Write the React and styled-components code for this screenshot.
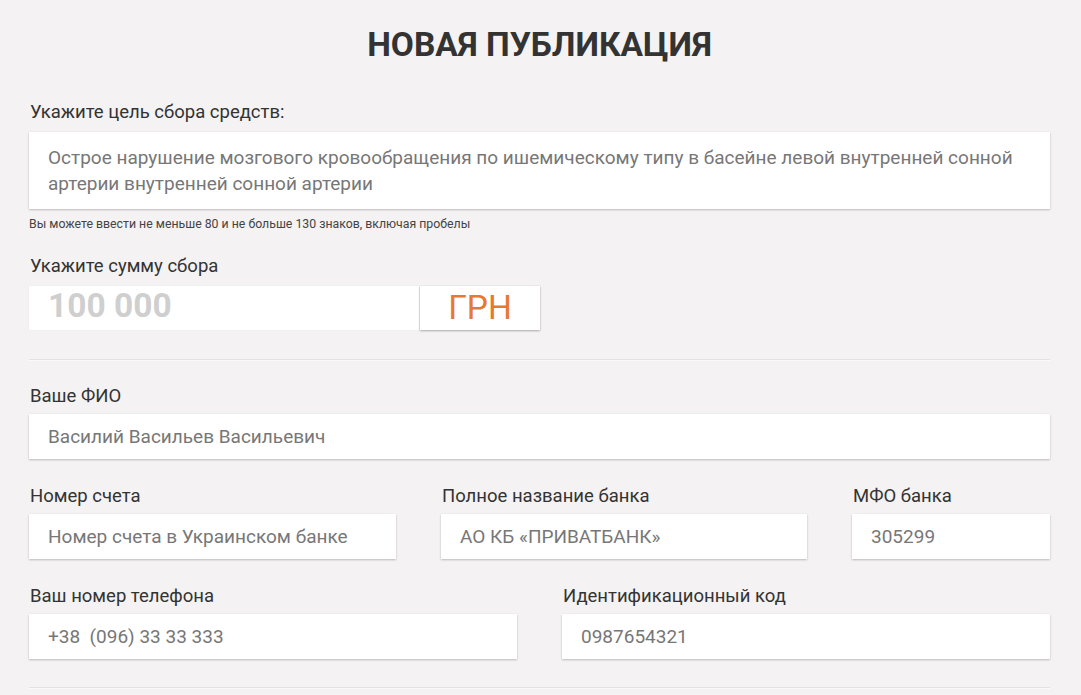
import styled, { createGlobalStyle } from "styled-components"

const GlobalStyle = createGlobalStyle`
  body {
    margin: 0;
    background: #f4f2f3;
    font-family: Roboto, "Liberation Sans", sans-serif;
    color: #333;
  }
`;

const Page = styled.div`
  padding: 0 31px 0 29px;
`;

const Title = styled.h1`
  margin: 0;
  padding-top: 25px;
  height: 69px;
  box-sizing: border-box;
  text-align: center;
  font-size: 33.5px;
  font-weight: 700;
  color: #333;
  line-height: 40px;
`;

const Field = styled.div`
  display: flex;
  flex-direction: column;
  min-width: 0;
`;

const Label = styled.label`
  display: block;
  font-size: 18.5px;
  line-height: 20px;
  color: #333;
  margin-bottom: ${(p) => p.$gap || 8}px;
  padding-left: 1px;
  white-space: nowrap;
`;

const Box = styled.div`
  background: #fff;
  box-shadow: 0 1px 2px rgba(0, 0, 0, 0.22), 0 0 1px rgba(0, 0, 0, 0.08);
  font-size: 19px;
  color: #777;
  padding: ${(p) => (p.$area ? "13px 19px 12px" : "0 19px")};
  line-height: ${(p) => (p.$area ? "26px" : "45px")};
  height: ${(p) => (p.$area ? "auto" : "45px")};
  box-sizing: border-box;
  white-space: ${(p) => (p.$area ? "normal" : "nowrap")};
  overflow: hidden;
`;

const Hint = styled.div`
  font-size: 12.3px;
  color: #444;
  margin-top: 9px;
  line-height: 13px;
`;

const Section = styled.div`
  margin-top: ${(p) => p.$top || 0}px;
`;

const AmountRow = styled.div`
  display: flex;
  width: 511px;
  height: 44px;
`;

const AmountInput = styled.div`
  flex: 1;
  background: #fff;
  font-size: 33.5px;
  font-weight: 700;
  color: #cfcfcf;
  line-height: 40px;
  padding-left: 19px;
  box-shadow: 0 0 1px rgba(0, 0, 0, 0.08);
`;

const Currency = styled.button`
  width: 120px;
  margin-left: 1px;
  border: none;
  background: #fff;
  box-shadow: 0 1px 2px rgba(0, 0, 0, 0.28), 0 0 1px rgba(0, 0, 0, 0.15);
  font-family: Roboto, "Liberation Sans", sans-serif;
  font-size: 33.5px;
  color: #e8782f;
  padding: 0;
  line-height: 44px;
`;

const Divider = styled.hr`
  margin: ${(p) => p.$top}px 0 0;
  border: none;
  border-top: 1px solid #e3e1e2;
  border-bottom: 1px solid #fbfafa;
  height: 0;
`;

const Grid = styled.div`
  display: grid;
  grid-template-columns: ${(p) => p.$cols};
  column-gap: 45px;
  margin-top: ${(p) => p.$top}px;
`;

export default function App() {
  return (
    <>
      <GlobalStyle />
      <Page>
        <Title>НОВАЯ ПУБЛИКАЦИЯ</Title>

        <Section $top={33}>
          <Label $gap={10}>Укажите цель сбора средств:</Label>
          <Box $area>
            Острое нарушение мозгового кровообращения по ишемическому типу в басейне левой внутренней сонной
            артерии внутренней сонной артерии
          </Box>
          <Hint>Вы можете ввести не меньше 80 и не больше 130 знаков, включая пробелы</Hint>
        </Section>

        <Section $top={25}>
          <Label $gap={10}>Укажите сумму сбора</Label>
          <AmountRow>
            <AmountInput>100 000</AmountInput>
            <Currency>ГРН</Currency>
          </AmountRow>
        </Section>

        <Divider $top={29} />

        <Section $top={25}>
          <Label>Ваше ФИО</Label>
          <Box>Василий Васильев Васильевич</Box>
        </Section>

        <Grid $cols="367px 366px 198px" $top={27}>
          <Field>
            <Label>Номер счета</Label>
            <Box>Номер счета в Украинском банке</Box>
          </Field>
          <Field>
            <Label>Полное название банка</Label>
            <Box>АО КБ «ПРИВАТБАНК»</Box>
          </Field>
          <Field>
            <Label>МФО банка</Label>
            <Box>305299</Box>
          </Field>
        </Grid>

        <Grid $cols="488px 488px" $top={27}>
          <Field>
            <Label>Ваш номер телефона</Label>
            <Box>+38&nbsp; (096) 33 33 333</Box>
          </Field>
          <Field>
            <Label>Идентификационный код</Label>
            <Box>0987654321</Box>
          </Field>
        </Grid>

        <Divider $top={28} />
      </Page>
    </>
  )
}
